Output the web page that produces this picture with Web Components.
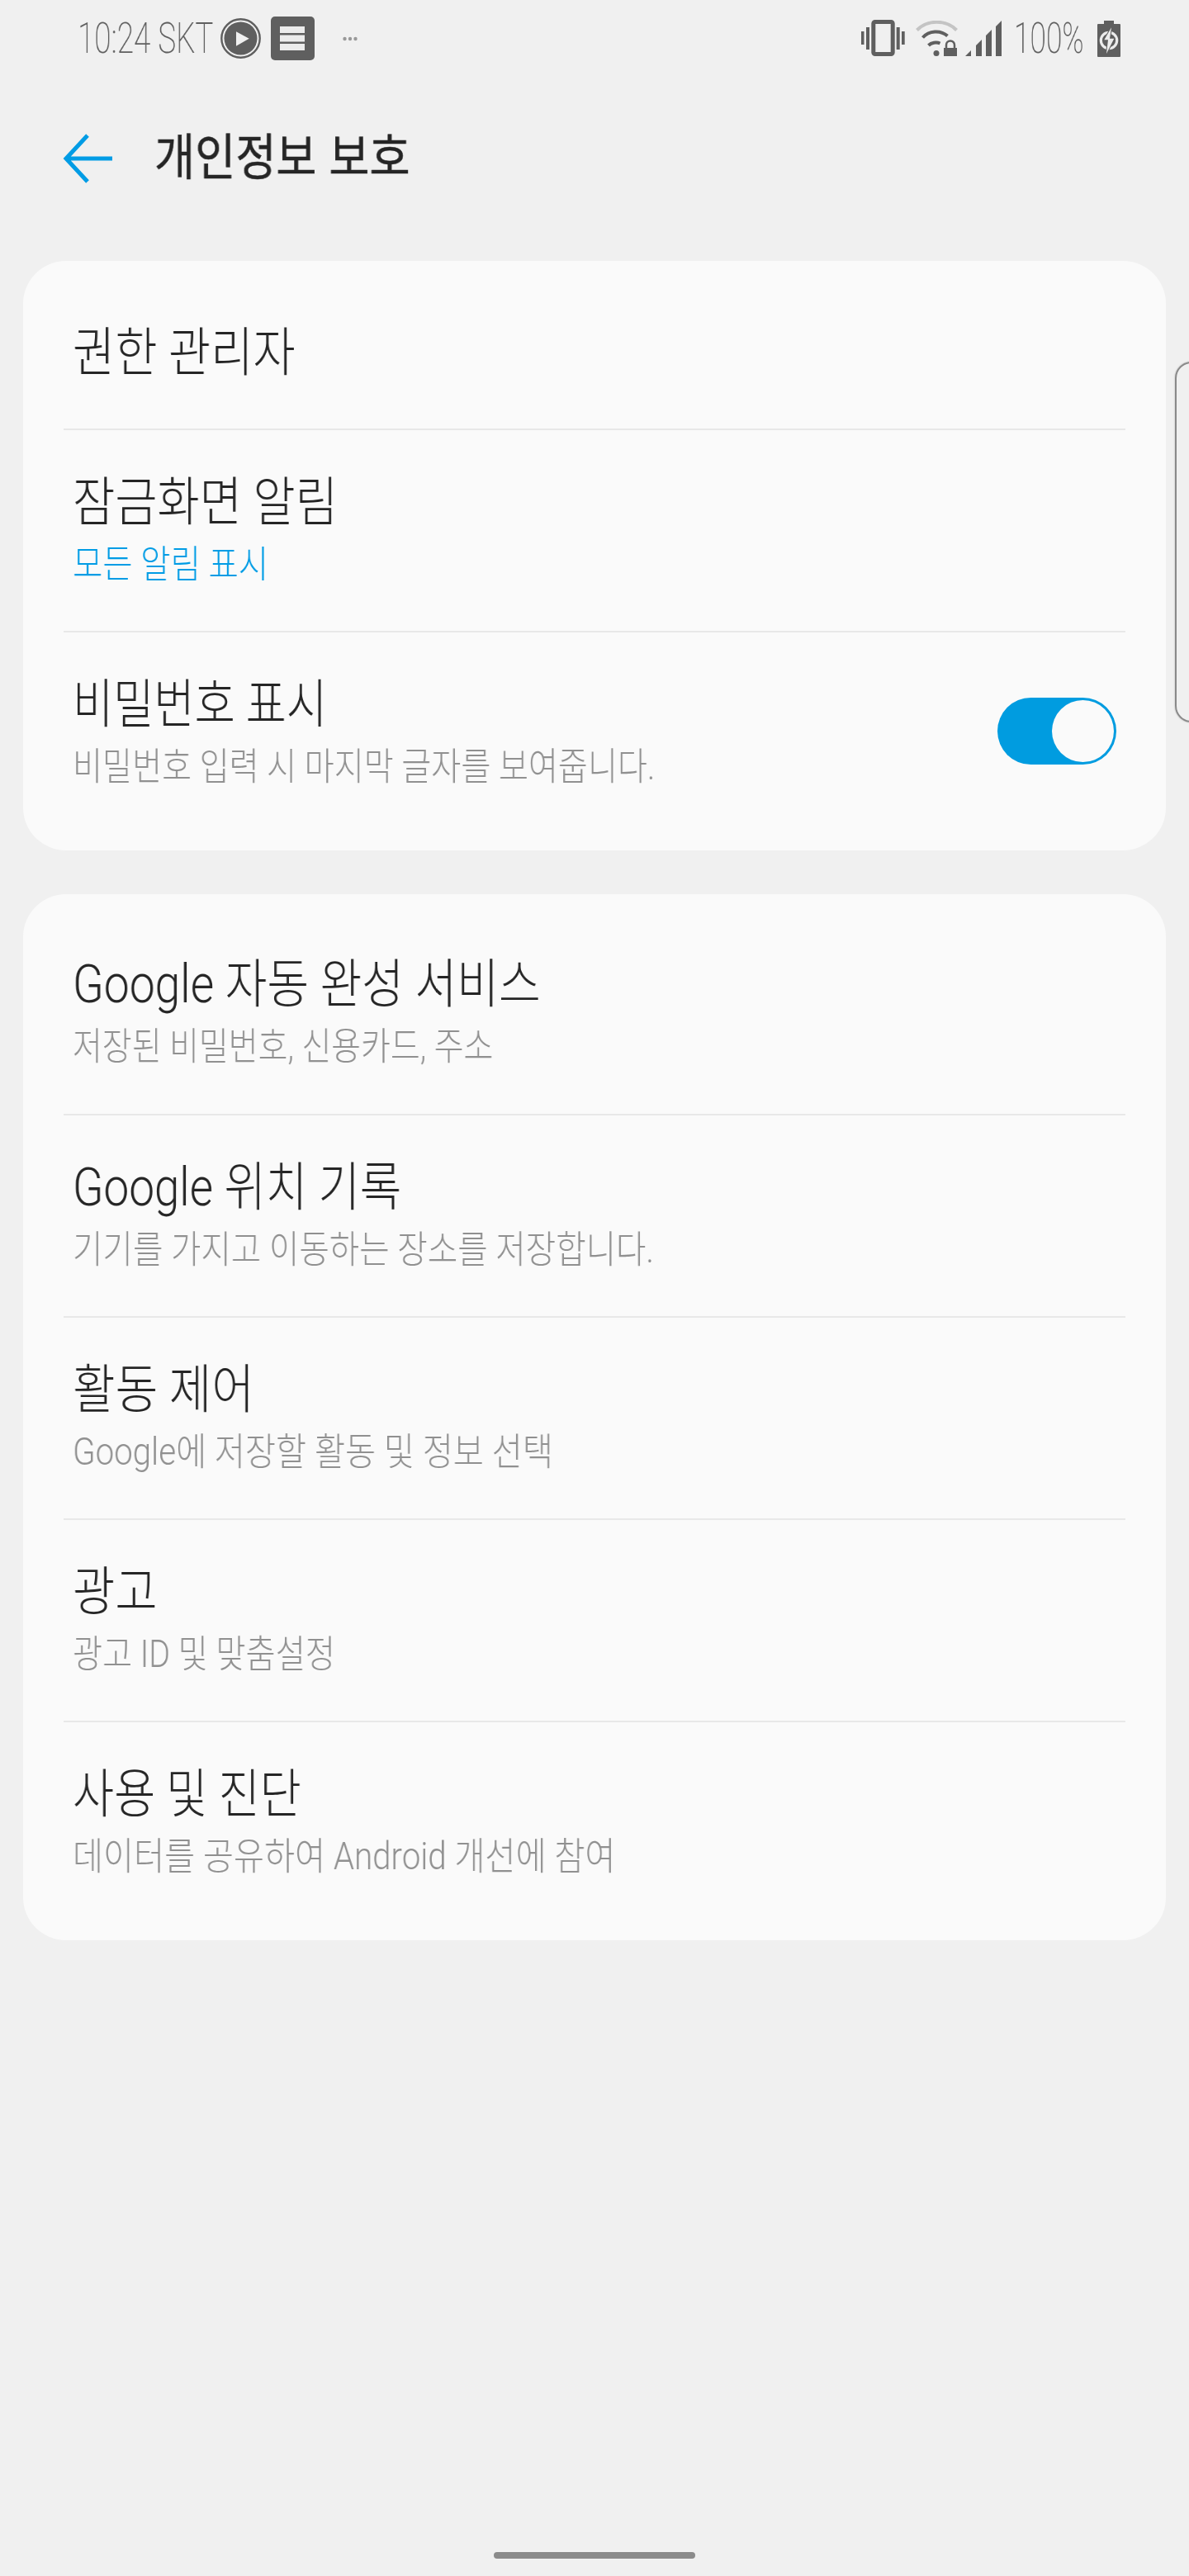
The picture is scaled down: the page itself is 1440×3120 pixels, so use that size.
<!DOCTYPE html>
<html lang="ko">
<head>
<meta charset="utf-8">
<title>개인정보 보호</title>
<style>
html, body { margin: 0; padding: 0; background: #f0f0f0; }
body { width: 1440px; height: 3120px; overflow: hidden; font-family: "Noto Sans CJK KR", "Noto Sans", sans-serif; }
</style>
</head>
<body>
<phone-screen>
    <status-bar time="10:24 SKT" battery="100%"></status-bar>
    <app-bar>개인정보 보호</app-bar>
    <settings-card>
        <settings-row label="권한 관리자" single></settings-row>
        <settings-row label="잠금화면 알림" detail="모든 알림 표시" detail-w=".858" accent></settings-row>
        <settings-row label="비밀번호 표시" label-w=".835" detail="비밀번호 입력 시 마지막 글자를 보여줍니다." detail-w=".851"><toggle-switch></toggle-switch></settings-row>
    </settings-card>
    <settings-card tall>
        <settings-row label="Google 자동 완성 서비스" label-w=".862" detail="저장된 비밀번호, 신용카드, 주소" detail-w=".847"></settings-row>
        <settings-row label="Google 위치 기록" label-w=".856" detail="기기를 가지고 이동하는 장소를 저장합니다." detail-w=".861"></settings-row>
        <settings-row label="활동 제어" label-w=".876" detail="Google에 저장할 활동 및 정보 선택" detail-w=".876"></settings-row>
        <settings-row label="광고" detail="광고 ID 및 맞춤설정" detail-w=".854"></settings-row>
        <settings-row label="사용 및 진단" label-w=".85" detail="데이터를 공유하여 Android 개선에 참여" detail-w=".875"></settings-row>
    </settings-card>
    <edge-handle></edge-handle>
    <home-pill></home-pill>
</phone-screen>

<script>
const KR_FONT = `Roboto, "Noto Sans CJK KR", "Noto Sans", sans-serif`;

// shared little helper, every element just sets its markup once
class ShadowBase extends HTMLElement {
    constructor() {
        super();
        this.attachShadow({ mode: "open" });
    }
    connectedCallback() {
        this.shadowRoot.innerHTML = this.render();
    }
}

customElements.define("phone-screen", class extends ShadowBase {
    render() {
        return `<style>
            :host { display: flex; flex-direction: column; position: relative; width: 1440px; height: 3120px; }
        </style><slot></slot>`;
    }
});

customElements.define("status-bar", class extends ShadowBase {
    render() {
        return `<style>
            :host { display: flex; align-items: flex-start; height: 90px; box-sizing: border-box; padding: 20px 0 0 94px; color: #5f5f5f; }
            .txt { font: 200 52px/50px Roboto, sans-serif; display: inline-block; white-space: nowrap; transform-origin: 0 0; margin-top: 2px; will-change: transform; }
            .time { width: 173px; transform: scaleX(.71); }
            svg { display: block; flex: none; }
            .play { margin: 2px 0 0 0; }
            .menu { margin: 0 0 0 12px; }
            .dots { margin: 24px 0 0 34px; }
            .right { margin-left: auto; display: flex; align-items: flex-start; padding-right: 83px; }
            .vib { margin: 4px 0 0 0; }
            .wifi { margin: 5px 0 0 13px; }
            .sig { margin: 5px 0 0 9px; }
            .pct { width: 100px; margin-left: 14px; transform: scaleX(.68); }
            .bat { margin: 5px 0 0 1px; }
        </style>
        <span class="txt time">${this.getAttribute("time")}</span>
        <svg class="play" width="49" height="49" viewBox="0 0 49 49" aria-hidden="true">
            <circle cx="24.5" cy="24.5" r="23.2" fill="none" stroke="#5f5f5f" stroke-width="2.4"/>
            <circle cx="24.5" cy="24.5" r="20" fill="#5f5f5f"/>
            <path d="M19 16.300 L34.700 24.700 L19 33.700 Z" fill="#f0f0f0"/>
        </svg>
        <svg class="menu" width="53" height="53" viewBox="0 0 53 53" aria-hidden="true">
            <rect width="53" height="53" rx="5" fill="#5f5f5f"/>
            <path d="M11 12h30v8H11zM11 22.500h30v8H11zM11 33h30v8H11z" fill="#ececec"/>
        </svg>
        <svg class="dots" width="18" height="6" viewBox="0 0 18 6" aria-hidden="true">
            <circle cx="2.5" cy="3" r="2.2" fill="#999"/><circle cx="9" cy="3" r="2.2" fill="#999"/><circle cx="15.5" cy="3" r="2.2" fill="#999"/>
        </svg>
        <div class="right">
            <svg class="vib" width="53" height="45" viewBox="0 0 53 45" aria-hidden="true">
                <rect x="14.800" y="2.500" width="23.400" height="39" rx="2" fill="none" stroke="#5f5f5f" stroke-width="5"/>
                <path d="M0 14h3.500v16H0zM6 9h4v27H6zM42.700 9h4v27h-4zM49 14h3.700v16H49z" fill="#5f5f5f"/>
            </svg>
            <svg class="wifi" width="51" height="43" viewBox="0 0 51 43" aria-hidden="true">
                <path d="M1.500 11.500 C14 -1.500 37 -1.500 49.500 11.500" fill="none" stroke="#c4c4c4" stroke-width="4"/>
                <path d="M8.500 20.500 C16 12 30 11 38.500 18.500" fill="none" stroke="#5f5f5f" stroke-width="4"/>
                <path d="M15.500 30 C19 26.500 25 25.500 29.500 27.500" fill="none" stroke="#5f5f5f" stroke-width="4"/>
                <circle cx="25" cy="39.500" r="3.500" fill="#5f5f5f"/>
                <path d="M34 33h16v10H34z" fill="#5f5f5f"/>
                <path d="M37 33v-3.500a5 5 0 0 1 10 0V33" fill="none" stroke="#5f5f5f" stroke-width="2.500"/>
            </svg>
            <svg class="sig" width="45" height="43" viewBox="0 0 45 43" aria-hidden="true">
                <path d="M0 43 L7 36 V43 Z M13 43 V30 L20 23 V43 Z M25 43 V18 L32 11 V43 Z M37 43 V7 L44 0 V43 Z" fill="#5f5f5f"/>
            </svg>
            <span class="txt pct">${this.getAttribute("battery")}</span>
            <svg class="bat" width="28" height="44" viewBox="0 0 28 44" aria-hidden="true">
                <path d="M8 0h12v4h7a1 1 0 0 1 1 1v38a1 1 0 0 1-1 1H1a1 1 0 0 1-1-1V5a1 1 0 0 1 1-1h7z" fill="#5f5f5f"/>
                <circle cx="14" cy="24" r="9.700" fill="none" stroke="#ececec" stroke-width="3.200"/>
                <path d="M17 8.300 L8.300 23.300 H13 L11 40 L20.300 21.700 H15 Z" fill="#ececec" stroke="#5f5f5f" stroke-width="2" paint-order="stroke"/>
            </svg>
        </div>`;
    }
});

customElements.define("app-bar", class extends ShadowBase {
    render() {
        return `<style>
            :host { display: flex; align-items: center; height: 226px; box-sizing: border-box; padding: 0 0 22px 76px; }
            svg { display: block; flex: none; }
            span { display: inline-block; margin: 0 0 12px 49px; font: 400 60px/70px "Noto Sans CJK KR", sans-serif; -webkit-text-stroke: .5px #252525; color: #252525; white-space: nowrap; transform: scaleX(.89); transform-origin: 0 50%; will-change: transform; }
        </style>
        <svg width="62" height="62" viewBox="0 0 62 62" aria-hidden="true">
            <path d="M60 31H5M30 3 L4 31 L30 59" fill="none" stroke="#009ce5" stroke-width="5"/>
        </svg>
        <span><slot></slot></span>`;
    }
});

customElements.define("settings-card", class extends ShadowBase {
    render() {
        return `<style>
            :host { display: block; margin: 0 28px 53px; padding: 20px 49px 21px; background: #fafafa; border-radius: 52px; }
            :host([tall]) { padding-top: 21px; }
            ::slotted(settings-row:not(:first-child)) { border-top: 2px solid #e8e8e8; }
        </style><slot></slot>`;
    }
});

customElements.define("settings-row", class extends ShadowBase {
    render() {
        const label = this.getAttribute("label");
        const detail = this.getAttribute("detail");
        const single = this.hasAttribute("single");
        // label-w / detail-w: horizontal squeeze, the phone font is narrower than Noto
        const labelW = this.getAttribute("label-w") || ".87";
        const detailW = this.getAttribute("detail-w") || ".85";
        return `<style>
            :host { display: flex; align-items: center; justify-content: space-between; box-sizing: border-box; height: ${single ? 183 : 245}px; padding: 0 11px; }
            .text { display: flex; flex-direction: column; }
            .label, .detail { display: block; white-space: nowrap; transform-origin: 0 50%; will-change: transform; }
            .label { font: 300 64px/68px ${KR_FONT}; color: #252525; transform: scaleX(${labelW}); }
            .detail { margin-top: 13px; font: 300 46px/54px ${KR_FONT}; color: ${this.hasAttribute("accent") ? "#009ce5" : "#909090"}; transform: scaleX(${detailW}); }
            ::slotted(toggle-switch) { margin-bottom: 4px; }
        </style>
        <div class="text">
            <span class="label">${label}</span>
            ${detail ? `<span class="detail">${detail}</span>` : ""}
        </div>
        <slot></slot>`;
    }
});

customElements.define("toggle-switch", class extends ShadowBase {
    render() {
        return `<style>
            :host { display: flex; align-items: center; justify-content: flex-end; flex: none; box-sizing: border-box; width: 144px; height: 81px; padding-right: 3px; background: #009ce0; border-radius: 41px; }
            i { display: block; width: 75px; height: 75px; border-radius: 50%; background: #fafafa; }
        </style><i></i>`;
    }
});

customElements.define("edge-handle", class extends ShadowBase {
    render() {
        return `<style>
            :host { display: block; position: absolute; left: 1423px; top: 438px; width: 40px; height: 437px; box-sizing: border-box; border: 2px solid #8a8a8a; border-radius: 36px; box-shadow: 0 0 2px rgba(0,0,0,.3); }
        </style>`;
    }
});

customElements.define("home-pill", class extends ShadowBase {
    render() {
        return `<style>
            :host { display: block; position: absolute; left: 598px; top: 3091px; width: 244px; height: 8px; background: #8b8b8b; border-radius: 4px; }
        </style>`;
    }
});
</script>
</body>
</html>
